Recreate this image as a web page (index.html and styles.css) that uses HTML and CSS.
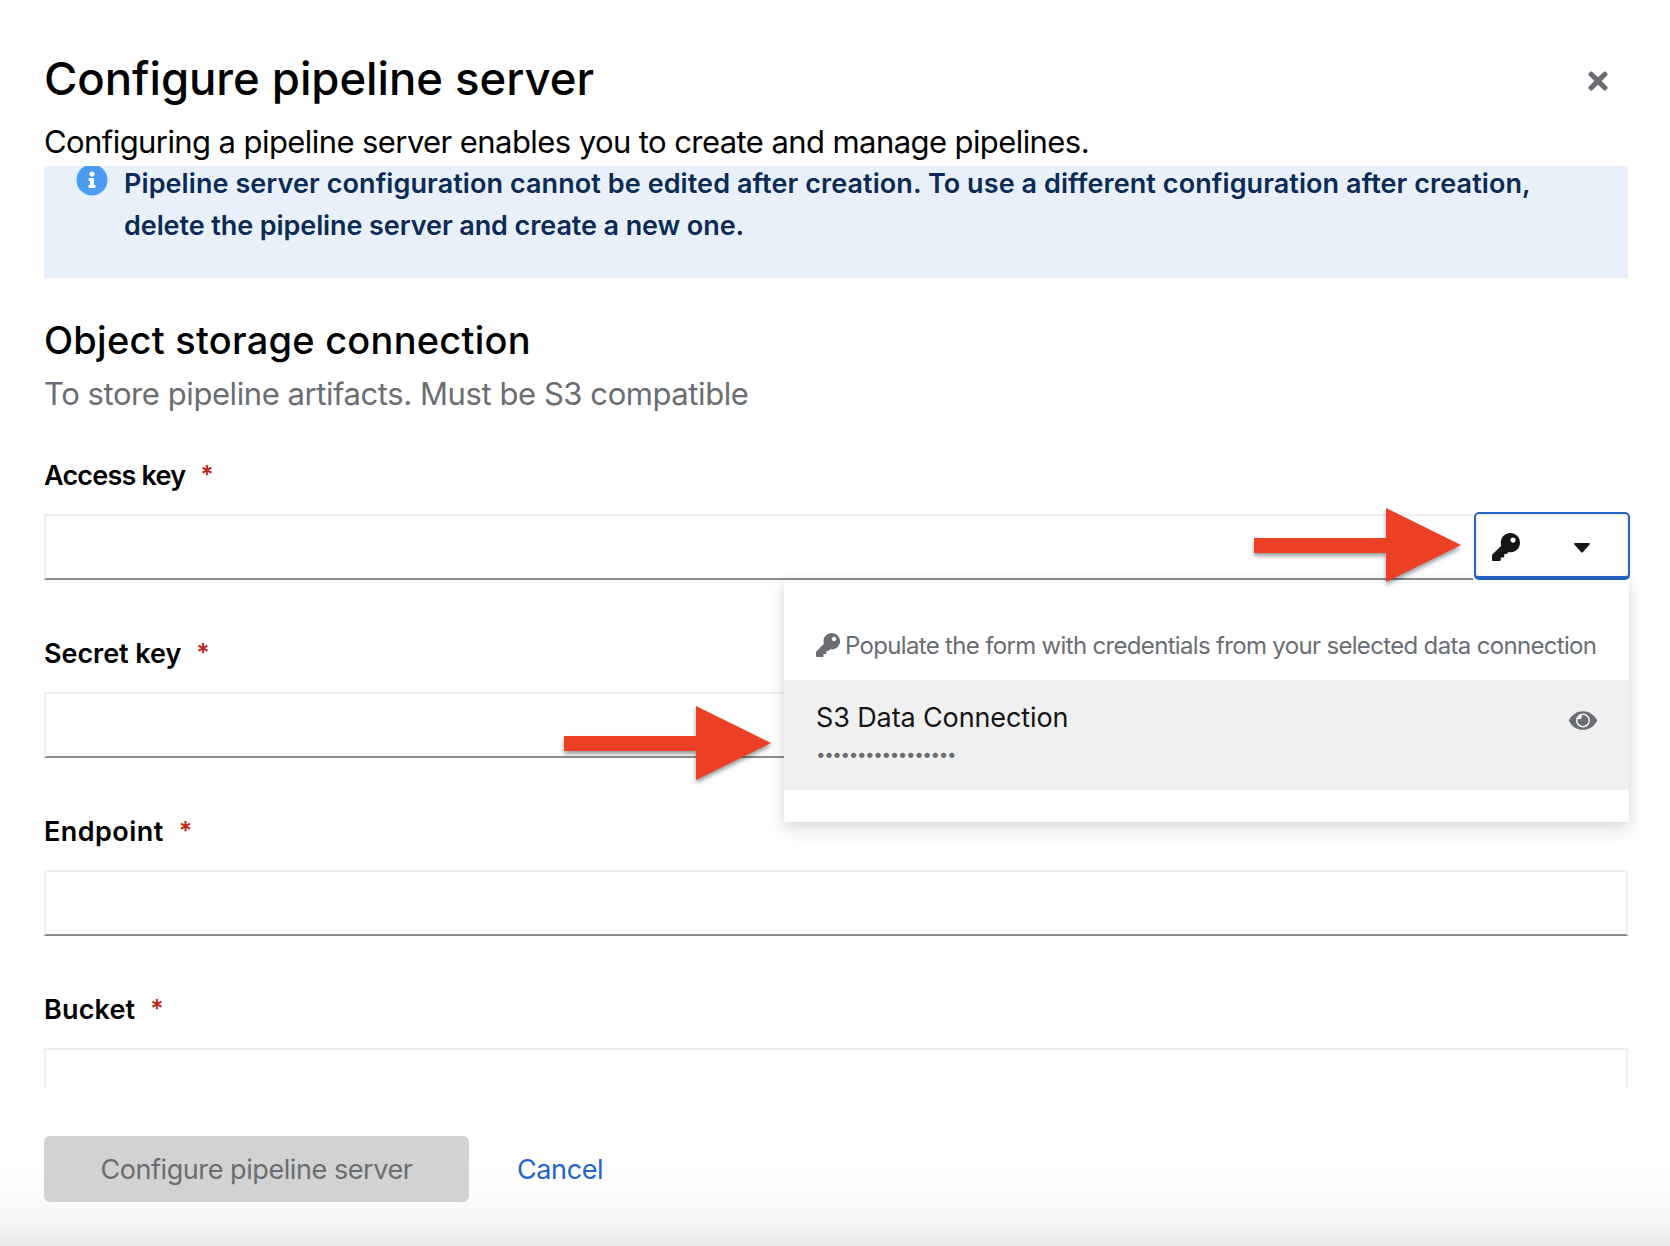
FILE: index.html
```html
<!DOCTYPE html>
<html lang="en">
<head>
<meta charset="utf-8">
<title>Configure pipeline server</title>
<link rel="stylesheet" href="styles.css">
</head>
<body>
<svg class="sprite" aria-hidden="true">
  <symbol id="key" viewBox="0 0 512 512"><path d="M512 176.001C512 273.203 433.202 352 336 352c-11.22 0-22.19-1.062-32.827-3.069l-24.012 27.014A23.999 23.999 0 0 1 261.223 384H224v40c0 13.255-10.745 24-24 24h-40v40c0 13.255-10.745 24-24 24H24c-13.255 0-24-10.745-24-24v-78.059c0-6.365 2.529-12.47 7.029-16.971l161.802-161.802C163.108 213.814 160 195.271 160 176 160 78.798 238.797.001 335.999 0 433.488-.001 512 78.511 512 176.001zM336 128c0 26.51 21.49 48 48 48s48-21.49 48-48-21.49-48-48-48-48 21.49-48 48z"/></symbol>
  <symbol id="arrow" viewBox="0 0 207 74"><path d="M0 30H132V0L207 37L132 74V45H0z"/></symbol>
</svg>
<main class="modal">
  <header class="modal-header">
    <div>
      <h1>Configure pipeline server</h1>
      <p class="description">Configuring a pipeline server enables you to create and manage pipelines.</p>
    </div>
    <button class="close" aria-label="Close"><svg viewBox="0 0 352 512"><path d="M242.72 256l100.07-100.07c12.28-12.28 12.28-32.19 0-44.48l-22.24-22.24c-12.28-12.28-32.19-12.28-44.48 0L176 189.28 75.93 89.21c-12.28-12.28-32.19-12.28-44.48 0L9.21 111.45c-12.28 12.28-12.28 32.19 0 44.48L109.28 256 9.21 356.07c-12.28 12.28-12.28 32.19 0 44.48l22.24 22.24c12.28 12.28 32.2 12.28 44.48 0L176 322.72l100.07 100.07c12.28 12.28 32.2 12.28 44.48 0l22.24-22.24c12.28-12.28 12.28-32.19 0-44.48L242.72 256z"/></svg></button>
  </header>

  <div class="modal-body">
    <div class="alert">
      <svg class="alert-icon" viewBox="0 0 512 512"><path d="M256 8C119.043 8 8 119.083 8 256c0 136.997 111.043 248 248 248s248-111.003 248-248C504 119.083 392.957 8 256 8z"/><path class="alert-i" d="M256 118c23.196 0 42 18.804 42 42s-18.804 42-42 42-42-18.804-42-42 18.804-42 42-42zm56 254c0 6.627-5.373 12-12 12h-88c-6.627 0-12-5.373-12-12v-24c0-6.627 5.373-12 12-12h12v-64h-12c-6.627 0-12-5.373-12-12v-24c0-6.627 5.373-12 12-12h64c6.627 0 12 5.373 12 12v100h12c6.627 0 12 5.373 12 12v24z"/></svg>
      <p class="alert-text"><span class="line-1">Pipeline server configuration cannot be edited after creation. To use a different configuration after creation,</span><br><span class="line-2">delete the pipeline server and create a new one.</span></p>
    </div>

    <h2>Object storage connection</h2>
    <p class="hint">To store pipeline artifacts. Must be S3 compatible</p>

    <div class="field">
      <label><span class="access">Access key</span><b>*</b></label>
      <div class="input-group">
        <div class="input"></div>
        <button class="toggle" aria-label="Data connections"><svg class="toggle-key"><use href="#key"/></svg><svg class="caret" viewBox="0 0 16 10"><path d="M1.2 0H14.8Q16.6.3 15.4 1.7L9 8.9Q8 9.9 7 8.9L.6 1.7Q-.6.3 1.2 0z"/></svg></button>
        <div class="menu">
          <div class="menu-header"><svg><use href="#key"/></svg><span>Populate the form with credentials from your selected data connection</span></div>
          <div class="menu-item">
            <div>
              <div class="item-name">S3 Data Connection</div>
              <div class="item-secret">•••••••••••••••••</div>
            </div>
            <svg class="eye" viewBox="0 0 576 512"><path d="M288 144a110.94 110.94 0 0 0-31.24 5 55.4 55.4 0 0 1 7.24 27 56 56 0 0 1-56 56 55.4 55.4 0 0 1-27-7.24A111.71 111.71 0 1 0 288 144zm284.52 97.4C518.29 135.59 410.93 64 288 64S57.68 135.64 3.48 241.41a32.35 32.35 0 0 0 0 29.19C57.71 376.41 165.07 448 288 448s230.32-71.64 284.52-177.41a32.35 32.35 0 0 0 0-29.19zM288 400a144 144 0 1 1 144-144 143.93 143.93 0 0 1-144 144z"/></svg>
          </div>
        </div>
      </div>
    </div>
    <div class="field">
      <label><span class="secret">Secret key</span><b>*</b></label>
      <div class="input"></div>
    </div>
    <div class="field">
      <label><span class="endpoint">Endpoint</span><b>*</b></label>
      <div class="input"></div>
    </div>
    <div class="field">
      <label><span class="bucket">Bucket</span><b>*</b></label>
      <div class="input"></div>
    </div>
  </div>

  <footer class="modal-footer">
    <button class="submit" disabled>Configure pipeline server</button>
    <button class="cancel">Cancel</button>
  </footer>

  <svg class="arrow arrow-toggle"><use href="#arrow"/></svg>
  <svg class="arrow arrow-item"><use href="#arrow"/></svg>
</main>
</body>
</html>
```
FILE: styles.css
```css
* { box-sizing: border-box; }

body {
  margin: 0;
  background: #fff;
  color: #000;
  font-family: Inter, "Liberation Sans", sans-serif;
}

h1, h2, p { margin: 0; }
h1, h2 { font-weight: 500; }
svg { display: block; flex: none; fill: currentColor; }
button { padding: 0; border: 0; background: none; font: inherit; color: inherit; }
span { white-space: nowrap; }
.sprite { position: absolute; width: 0; height: 0; }

.modal {
  position: relative;
  display: flex;
  flex-direction: column;
  width: 1670px;
  height: 1246px;
  overflow: hidden;
  background: linear-gradient(#fff 0, #fff 1160px, #fbfbfb 1200px, #f4f4f4 1225px, #e8e8e8 1246px);
}

.modal-header {
  display: flex;
  justify-content: space-between;
  height: 166px;
  padding: 52px 62px 0 44px;
}
h1 { font-size: 45.5px; line-height: 54px; letter-spacing: -.04px; }
.description { margin-top: 16px; font-size: 31px; line-height: 40px; letter-spacing: -.58px; }
.close { height: 28px; margin-top: 15px; color: #6a6e73; }
.close svg { width: 20px; height: 28px; }

.modal-body {
  height: 922px;
  padding: 0 42px 0 44px;
  overflow: hidden;
}

.alert {
  display: flex;
  height: 112px;
  padding-left: 32px;
  gap: 16px;
  background: #e8f1f9;
}
.alert-icon { width: 32px; height: 32px; margin-top: -2px; color: #4a9cf0; }
.alert-i { fill: #fff; }
.alert-text { margin-top: -3px; font-size: 27px; line-height: 42px; font-weight: 600; color: #0b2b54; }
.line-1 { letter-spacing: .077px; }
.line-2 { letter-spacing: -.09px; }

h2 { margin-top: 38px; font-size: 38px; line-height: 48px; letter-spacing: .24px; }
.hint { margin: 10px 0 42px; font-size: 31px; line-height: 40px; letter-spacing: -.43px; color: #6a6e73; }

.field { margin-bottom: 54px; }
label {
  display: flex;
  gap: 15px;
  margin-bottom: 18px;
  font-size: 27px;
  line-height: 40px;
  font-weight: 600;
}
.access { letter-spacing: -.8px; }
.secret { letter-spacing: -.05px; }
.endpoint { letter-spacing: .45px; }
.bucket { letter-spacing: .15px; }
label b { margin-top: -1px; font-weight: 600; font-size: 25px; color: #c0291b; }

.input {
  flex: 1;
  height: 66px;
  border: 2px solid #f0f0f0;
  border-bottom-color: #8a8d90;
  background: #fff;
}
.input-group { position: relative; display: flex; }
.input-group .input { border-right: 0; }
.toggle {
  display: flex;
  align-items: center;
  width: 156px;
  height: 68px;
  margin: -2px -2px 0 1px;
  padding: 4px 0 0 16px;
  gap: 54px;
  border: 2px solid #2563c4;
  border-bottom-width: 4px;
  border-radius: 5px;
  box-shadow: inset 0 2px 0 #f0f0f0, inset 2px 0 0 #f0f0f0, inset -2px 0 0 #f0f0f0;
  color: #151515;
}
.toggle-key { width: 28px; height: 28px; }
.caret { width: 16px; height: 10px; margin-top: 2px; }

/* Dropdown opened below the toggle */
.menu {
  position: absolute;
  z-index: 1;
  top: 66px;
  right: -1px;
  width: 845px;
  height: 242px;
  background: #fff;
  box-shadow: 0 8px 16px rgba(3, 3, 3, .12), 0 0 12px rgba(3, 3, 3, .06);
}
.menu-header {
  display: flex;
  height: 100px;
  padding: 45px 0 0 32px;
  gap: 5px;
  color: #6a6e73;
  font-size: 24px;
  line-height: 42px;
  letter-spacing: -.67px;
}
.menu-header svg { width: 24px; height: 24px; margin-top: 8px; }
.menu-item {
  display: flex;
  justify-content: space-between;
  height: 110px;
  padding: 18px 32px 0;
  background: #f0f0f0;
  color: #151515;
}
.item-name { font-size: 27px; line-height: 40px; letter-spacing: -.12px; }
.item-secret { font-size: 17px; line-height: 32px; letter-spacing: -1.38px; color: #6a6e73; }
.eye { width: 28px; height: 25px; margin-top: 9.5px; color: #6a6e73; }

.modal-footer {
  display: flex;
  align-items: flex-start;
  gap: 48px;
  padding: 48px 44px 0;
  font-size: 27px;
  line-height: 66px;
}
.submit { width: 425px; height: 66px; padding-top: 1px; border-radius: 6px; background: #d2d2d2; color: #6a6e73; letter-spacing: -.43px; }
.cancel { padding-top: 1px; color: #2365c8; letter-spacing: -.4px; }

/* Callout arrows drawn over the dialog */
.arrow {
  position: absolute;
  z-index: 2;
  width: 207px;
  height: 74px;
  color: #eb4025;
  overflow: visible;
  filter: drop-shadow(0 3px 2px rgba(0, 0, 0, .4));
}
.arrow-toggle { left: 1254px; top: 508px; }
.arrow-item { left: 564px; top: 706px; }
```
